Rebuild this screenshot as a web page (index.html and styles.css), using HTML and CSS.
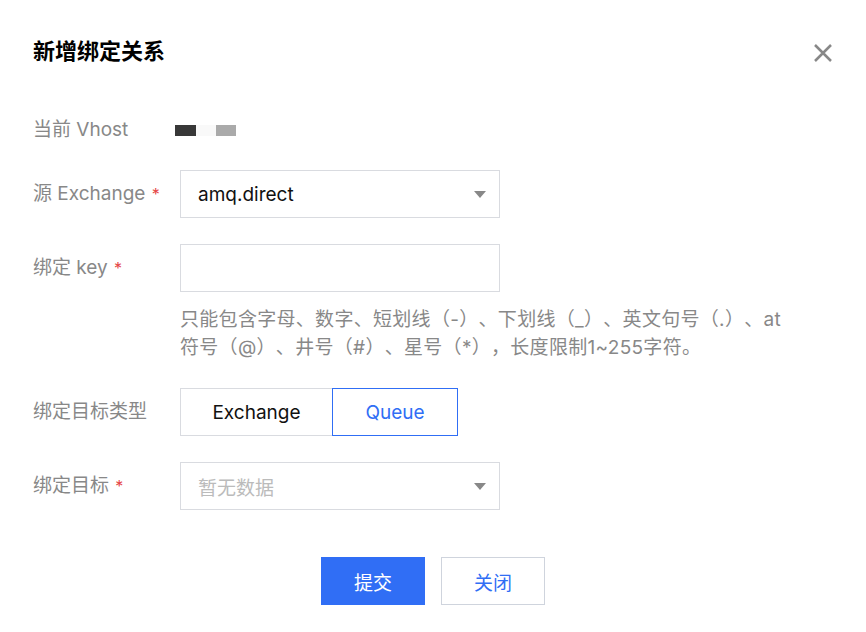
FILE: index.html
```html
<!DOCTYPE html>
<html lang="zh">
<head>
<meta charset="utf-8">
<link rel="stylesheet" href="styles.css">
</head>
<body>
<div class="dialog">
  <div class="header">
    <h1 class="title">新增绑定关系</h1>
    <button class="close" aria-label="关闭">
      <svg width="20" height="20" viewBox="0 0 20 20"><path d="M2 2 L18 18 M18 2 L2 18" stroke="#888" stroke-width="2.5" fill="none"/></svg>
    </button>
  </div>
  <div class="form">
    <div class="row row-text">
      <div class="label">当前 Vhost</div>
      <div class="control vhost">
        <span class="blk blk-dark"></span><span class="blk blk-light"></span><span class="blk blk-gray"></span>
      </div>
    </div>
    <div class="row">
      <div class="label">源 Exchange <span class="req">*</span></div>
      <div class="control">
        <div class="select"><span class="val">amq.direct</span><span class="caret"></span></div>
      </div>
    </div>
    <div class="row">
      <div class="label">绑定 key <span class="req">*</span></div>
      <div class="control">
        <div class="input"></div>
        <p class="help">只能包含字母、数字、短划线（-）、下划线（_）、英文句号（.）、at<br>符号（@）、井号（#）、星号（*），长度限制1~255字符。</p>
      </div>
    </div>
    <div class="row">
      <div class="label">绑定目标类型</div>
      <div class="control">
        <div class="seg"><span class="seg-item seg-ex">Exchange</span><span class="seg-item seg-q active">Queue</span></div>
      </div>
    </div>
    <div class="row">
      <div class="label">绑定目标 <span class="req">*</span></div>
      <div class="control">
        <div class="select"><span class="val placeholder">暂无数据</span><span class="caret"></span></div>
      </div>
    </div>
  </div>
  <div class="footer">
    <button class="btn btn-primary">提交</button>
    <button class="btn btn-default">关闭</button>
  </div>
</div>
</body>
</html>
```
FILE: styles.css
```css
* { box-sizing: border-box; }
html, body { margin: 0; padding: 0; background: #fff; }
body {
  font-family: Inter, "Noto Sans CJK SC", sans-serif;
  font-size: 19px;
  color: #000;
  text-spacing-trim: space-all;
}
.dialog { width: 866px; height: 632px; padding: 36px 33px 0 33px; }
.header { display: flex; justify-content: space-between; align-items: center; height: 30px; }
.title { margin: 0; font-size: 22px; font-weight: 700; line-height: 30px; color: #000; }
.close { border: 0; background: none; padding: 0; width: 20px; height: 20px; display: flex; margin-top: 4px; }
.form { margin-top: 50px; display: flex; flex-direction: column; gap: 26px; }
.row { display: flex; align-items: flex-start; }
.label { width: 147px; flex: none; color: #888; line-height: 48px; white-space: nowrap; }
.row-text .label { line-height: 28px; }
.req { color: #e54545; font-size: 16px; margin-left: 1px; }
.control { flex: 1; }
.vhost { display: flex; align-items: center; height: 28px; margin-left: -5px; }
.blk { display: block; height: 11px; }
.blk-dark { width: 21px; background: #383838; }
.blk-light { width: 20px; background: #f9f9f9; }
.blk-gray { width: 20px; background: #aaa; }
.select, .input {
  width: 320px; height: 48px; border: 1px solid #d9dbe0; background: #fff;
  display: flex; align-items: center; justify-content: space-between; padding: 0 13px 0 17px;
}
.val { color: #111; }
.placeholder { color: #bbb; }
.caret { width: 0; height: 0; border-left: 6.5px solid transparent; border-right: 6.5px solid transparent; border-top: 7px solid #888; }
.help { margin: 14px 0 0; color: #888; line-height: 28px; white-space: nowrap; letter-spacing: 0.3px; }
.seg { display: inline-flex; height: 48px; }
.seg-item { display: flex; align-items: center; justify-content: center; border: 1px solid #d9dbe0; color: #111; line-height: 1; }
.seg-ex { width: 153px; }
.seg-q { width: 126px; margin-left: -1px; }
.seg-item.active { border-color: #306ef5; color: #306ef5; position: relative; }
.footer { display: flex; justify-content: center; gap: 16px; margin-top: 47px; }
.btn { width: 104px; height: 48px; font-family: inherit; font-size: 19px; border: 1px solid #306ef5; cursor: pointer; }
.btn-primary { background: #306ef5; color: #fff; }
.btn-default { background: #fff; color: #306ef5; border-color: #cfd4dd; }
```
